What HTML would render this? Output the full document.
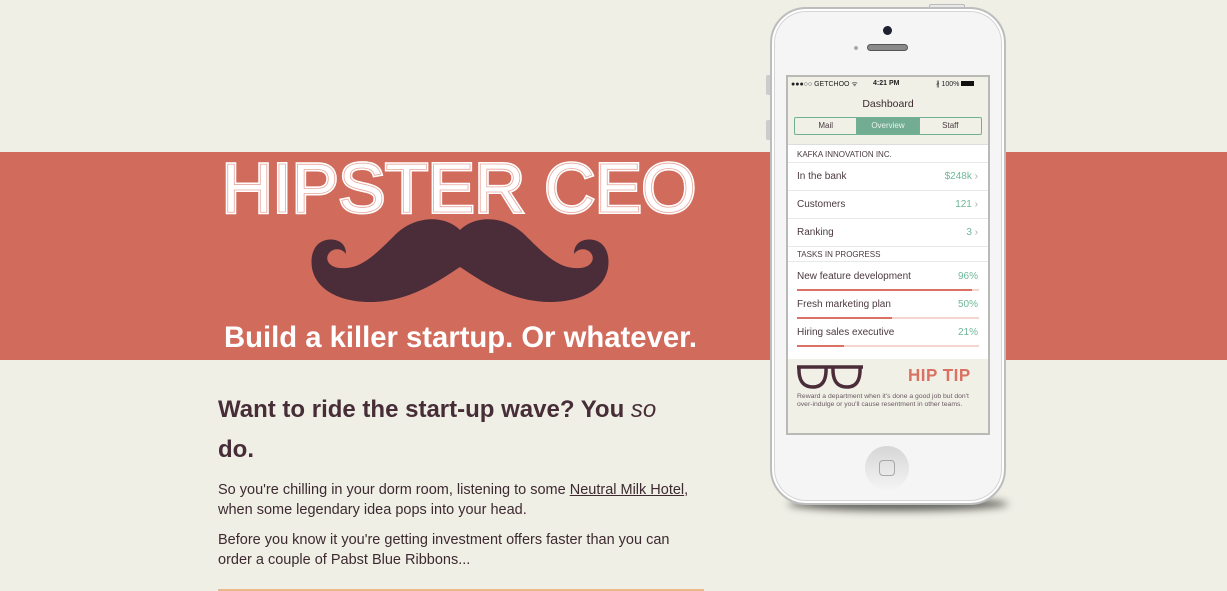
<!DOCTYPE html>
<html><head><meta charset="utf-8"><style>
*{margin:0;padding:0;box-sizing:border-box}
body{width:1227px;height:591px;overflow:hidden;background:#efefe6;font-family:"Liberation Sans",sans-serif;position:relative}
.band{position:absolute;left:0;top:152px;width:1227px;height:208px;background:#d16b5c}
.ab{position:absolute}
h2{position:absolute;left:218px;top:390px;width:480px;font-size:24px;line-height:40px;color:#472d37;font-weight:bold}
p{position:absolute;left:218px;font-size:14.5px;line-height:20px;color:#3d2a30;width:476px}
p a{color:#3d2a30;text-decoration:underline}
.scr{position:absolute;left:786px;top:75px;width:204px;height:360px;border:2px solid #b9b9b5;background:#fff;overflow:hidden;font-size:10px;color:#4a3a40}
.row{position:absolute;left:0;width:200px;border-bottom:1px solid #e8e8e6}
.row span{position:absolute;left:9px}
.row b{position:absolute;right:10px;font-weight:normal;color:#6fb89a}
</style></head><body>
<div class="band"></div>
<svg class="ab" style="left:210px;top:150px" width="500" height="210">
 <text x="12" y="62" textLength="474" lengthAdjust="spacingAndGlyphs" font-family="Liberation Sans" font-size="70" fill="#fff" stroke="#fff" stroke-width="4" stroke-linejoin="miter">HIPSTER CEO</text>
 <text x="12" y="62" textLength="474" lengthAdjust="spacingAndGlyphs" font-family="Liberation Sans" font-size="70" fill="none" stroke="#e8a99f" stroke-width="0.8">HIPSTER CEO</text>
 <path d="M250 80 C235 65 205 65 185 85 C165 105 150 120 130 118 C118 117 114 108 120 102 C124 98 132 98 136 104 C136 92 126 88 116 90 C104 93 100 105 102 118 C106 140 130 152 160 152 C200 152 230 130 250 117 C270 130 300 152 340 152 C370 152 394 140 398 118 C400 105 396 93 384 90 C374 88 364 92 364 104 C368 98 376 98 380 102 C386 108 382 117 370 118 C350 120 335 105 315 85 C295 65 265 65 250 80Z" fill="#4a2d38"/>
 <text x="14" y="197" font-family="Liberation Sans" font-weight="bold" font-size="29.5" fill="#fff" textLength="473" lengthAdjust="spacingAndGlyphs">Build a killer startup. Or whatever.</text>
</svg>
<h2>Want to ride the start-up wave? You <i style="font-weight:normal">so</i> do.</h2>
<p style="top:480px">So you're chilling in your dorm room, listening to some <a>Neutral Milk Hotel</a>, when some legendary idea pops into your head.</p>
<p style="top:530px;width:462px">Before you know it you're getting investment offers faster than you can order a couple of Pabst Blue Ribbons...</p>
<div class="ab" style="left:218px;top:589px;width:486px;height:2px;background:#e9b98c"></div>

<div class="ab" style="left:788px;top:497px;width:220px;height:14px;border-radius:50%;background:#3a3a36;filter:blur(4px);opacity:.75"></div>
<div class="ab" style="left:929px;top:4px;width:36px;height:5px;border:1px solid #bbb;border-radius:2px;background:#e8e8e8"></div>
<div class="ab" style="left:766px;top:75px;width:6px;height:20px;background:#ccc;border-radius:2px"></div>
<div class="ab" style="left:766px;top:120px;width:6px;height:20px;background:#ccc;border-radius:2px"></div>
<div class="ab" style="left:770px;top:7px;width:236px;height:498px;border-radius:36px;background:#f6f5f5;border:2px solid #bdbdbd;box-shadow:inset 0 0 0 2px #fff,inset 0 0 0 3px #d5d5d5"></div>
<div class="ab" style="left:883px;top:26px;width:9px;height:9px;border-radius:50%;background:#1e2230"></div>
<div class="ab" style="left:854px;top:46px;width:4px;height:4px;border-radius:50%;background:#aaa"></div>
<div class="ab" style="left:867px;top:44px;width:41px;height:7px;border-radius:4px;background:#8a8a8a;border:1.5px solid #555"></div>
<div class="ab" style="left:865px;top:446px;width:44px;height:44px;border-radius:50%;background:linear-gradient(#d6d6d6,#f4f4f4);"></div>
<div class="ab" style="left:879px;top:460px;width:16px;height:16px;border-radius:4px;border:1.5px solid #a8a8a8"></div>

<div class="scr">
 <div class="ab" style="left:0;top:0;width:200px;height:68px;background:#f0f0e7;border-bottom:1px solid #ddd"></div>
 <div class="ab" style="left:3px;top:3px;font-size:7px;color:#222">●●●○○ GETCHOO ᯤ</div>
 <div class="ab" style="left:85px;top:3px;font-size:7px;color:#222;font-weight:bold">4:21 PM</div>
 <div class="ab" style="left:148px;top:3px;font-size:7px;color:#222">∦ 100% <span style="display:inline-block;width:13px;height:5px;background:#111"></span></div>
 <div class="ab" style="left:0;top:21px;width:200px;text-align:center;font-size:10.5px;color:#3d2a30">Dashboard</div>
 <div class="ab" style="left:6px;top:40px;width:188px;height:18px;border:1px solid #72b093;border-radius:2px;font-size:8px;display:flex;background:#f0f0e7">
  <div style="flex:1;text-align:center;line-height:16px;border-right:1px solid #72b093">Mail</div>
  <div style="flex:1;text-align:center;line-height:16px;background:#72ac93;color:#e8f2ec">Overview</div>
  <div style="flex:1;text-align:center;line-height:16px;border-left:1px solid #72b093">Staff</div>
 </div>
 <div class="row" style="top:69px;height:17px"><span style="top:4px;font-size:8px">KAFKA INNOVATION INC.</span></div>
 <div class="row" style="top:86px;height:28px"><span style="top:8px">In the bank</span><b style="top:8px">$248k <span style="position:static;color:#aaa">›</span></b></div>
 <div class="row" style="top:114px;height:28px"><span style="top:8px">Customers</span><b style="top:8px">121 <span style="position:static;color:#aaa">›</span></b></div>
 <div class="row" style="top:142px;height:28px"><span style="top:8px">Ranking</span><b style="top:8px">3 <span style="position:static;color:#aaa">›</span></b></div>
 <div class="row" style="top:170px;height:14px;border:0"><span style="top:3px;font-size:8px">TASKS IN PROGRESS</span></div>
 <div class="row" style="top:184px;height:1px"></div>
 <div class="row" style="top:192px;height:24px;border:0"><span style="top:2px">New feature development</span><b style="top:2px">96%</b></div>
 <div class="ab" style="left:9px;top:212px;width:182px;height:2px;background:#f5d5cf"><div style="width:96%;height:2px;background:#d97262"></div></div>
 <div class="row" style="top:220px;height:24px;border:0"><span style="top:2px">Fresh marketing plan</span><b style="top:2px">50%</b></div>
 <div class="ab" style="left:9px;top:240px;width:182px;height:2px;background:#f5d5cf"><div style="width:52%;height:2px;background:#d97262"></div></div>
 <div class="row" style="top:248px;height:24px;border:0"><span style="top:2px">Hiring sales executive</span><b style="top:2px">21%</b></div>
 <div class="ab" style="left:9px;top:268px;width:182px;height:2px;background:#f5d5cf"><div style="width:26%;height:2px;background:#d97262"></div></div>
 <div class="ab" style="left:0;top:282px;width:200px;height:80px;background:#f0f0e7"></div>
 <svg class="ab" style="left:8px;top:287px" width="68" height="26"><path d="M1 3 L67 3" stroke="#4a2d38" stroke-width="3.5"/><path d="M3 3 Q2 23 17 23 Q31 23 30 3 M37 3 Q36 23 51 23 Q65 23 64 3" fill="none" stroke="#4a2d38" stroke-width="3.5"/></svg>
 <div class="ab" style="left:120px;top:289px;font-size:17px;font-weight:bold;color:#d97262;letter-spacing:0.5px;transform:scaleY(1.05)">HIP TIP</div>
 <div class="ab" style="left:9px;top:316px;width:172px;font-size:6.8px;line-height:7.5px;color:#6a5a60">Reward a department when it's done a good job but don't over-indulge or you'll cause resentment in other teams.</div>
</div>
</body></html>
